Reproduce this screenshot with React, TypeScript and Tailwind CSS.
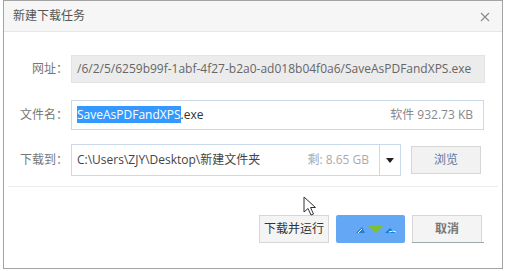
import React from "react";

const font = { fontFamily: '"Open Sans", "Noto Sans CJK SC", sans-serif' };

function Label({ children }: { children: React.ReactNode }) {
  return <div className="w-[67px] shrink-0 pr-[3px] text-right text-[12px] text-[#777]">{children}</div>;
}

export default function App() {
  return (
    <div className="h-[271px] w-[508px] bg-white" style={font}>
      <div className="ml-[3px] flex h-[269px] w-[500px] flex-col border border-[#a3a3a3] bg-white">
        <div className="flex h-[31px] shrink-0 items-center justify-between border-b border-[#e6e6e6] bg-[#f6f6f6] pl-[9px] pr-[12px]">
          <span className="text-[12px] text-[#555]">新建下载任务</span>
          <svg width="10" height="10" viewBox="0 0 10 10" className="mt-[1px]">
            <path d="M1 1 L9 9 M9 1 L1 9" stroke="#8a8a8a" strokeWidth="1.1" />
          </svg>
        </div>

        <div className="mt-[23px] flex items-center">
          <Label>网址：</Label>
          <div className="flex h-[28px] w-[414px] items-center overflow-hidden whitespace-nowrap border border-[#e3e3e3] bg-[#ececec] pl-[5px] text-[12px] text-[#666]">
            /6/2/5/6259b99f-1abf-4f27-b2a0-ad018b04f0a6/SaveAsPDFandXPS.exe
          </div>
        </div>

        <div className="mt-[17px] flex items-center">
          <Label>文件名：</Label>
          <div className="flex h-[30px] w-[413px] items-center justify-between border border-[#c9d9ea] bg-white pl-[5px] pr-[10px] text-[12px] text-[#333]">
            <span>
              <span className="bg-[#3399ff] text-white">SaveAsPDFandXPS</span>.exe
            </span>
            <span className="text-[#888]">软件 932.73 KB</span>
          </div>
        </div>

        <div className="mt-[14px] flex items-center">
          <Label>下载到：</Label>
          <div className="flex h-[32px] w-[330px] items-center border border-[#c9d9ea] bg-white text-[12px]">
            <div className="flex h-full w-[308px] items-center justify-between border-r border-[#c9d9ea] pl-[5px] pr-[10px]">
              <span className="text-[#444]">C:\Users\ZJY\Desktop\新建文件夹</span>
              <span className="text-[#aaa]">剩: 8.65 GB</span>
            </div>
            <div className="flex flex-1 items-center justify-center">
              <svg width="8" height="5" viewBox="0 0 8 5">
                <path d="M0 0 H8 L4 5 Z" fill="#222" />
              </svg>
            </div>
          </div>
          <div className="ml-[10px] flex h-[28px] w-[70px] items-center justify-center border border-[#d6d6d6] bg-[#f2f2f2] text-[12px] text-[#5a76a0]">
            浏览
          </div>
        </div>

        <div className="mx-[4px] mt-[10px] h-px bg-[#ececec]" />

        <div className="relative mt-[28px] flex justify-end gap-[7px] pr-[20px]">
          <svg width="16" height="22" viewBox="0 0 16 22" className="absolute left-[299px] top-[-19px]">
            <path d="M1 1 L1 16 L5 12.5 L8 19 L10.5 18 L7.5 11.5 L12.5 11.5 Z" fill="#fff" stroke="#333" strokeWidth="1" />
          </svg>
          <div className="flex h-[28px] w-[70px] items-center justify-center border border-[#d6d6d6] bg-[#f4f4f4] text-[12px] text-[#333]">
            下载并运行
          </div>
          <div className="flex h-[28px] w-[69px] items-center justify-center rounded-[2px] bg-[#64a8f5] pl-[10px]">
            <svg width="40" height="9" viewBox="0 0 40 9">
              <path d="M0 8 L6 2 L9 8 Z" fill="#1c7fd8" />
              <path d="M2 8 L6 4" stroke="#fff" strokeWidth="1" />
              <path d="M12 1 H27 L20 8 Z" fill="#7fc12a" />
              <path d="M29 8 L34 3 L40 8 Z" fill="#1c7fd8" />
              <path d="M33 7 Q37 5 40 7" stroke="#fff" strokeWidth="1" fill="none" />
            </svg>
          </div>
          <div className="relative flex h-[28px] w-[70px] items-center justify-center border border-[#d6d6d6] bg-[#f4f4f4] text-[12px] font-bold text-[#777]">
            取消
            <div className="absolute bottom-[-1px] left-[-1px] h-px w-[72px] bg-[#9aa]" />
          </div>
        </div>
      </div>
    </div>
  );
}
